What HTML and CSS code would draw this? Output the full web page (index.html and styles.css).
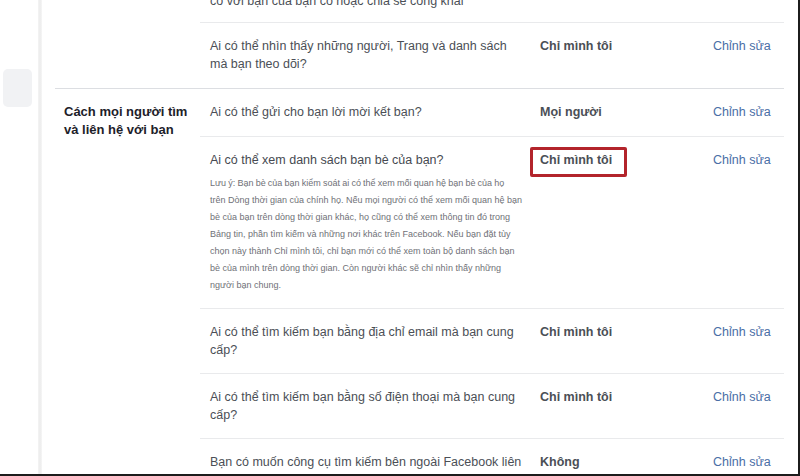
FILE: index.html
```html
<!DOCTYPE html>
<html lang="vi">
<head>
<meta charset="utf-8">
<link rel="stylesheet" href="styles.css">
</head>
<body>
<div class="frame">
  <aside class="side">
    <div class="side-item"></div>
  </aside>
  <div class="rule"></div>
  <main class="main">
    <section class="section first">
      <div class="label"></div>
      <div class="rows">
        <div class="row cut">
          <div class="q">có với bạn của bạn có hoặc chia sẻ công khai</div>
          <div class="v"></div>
          <div class="e"></div>
        </div>
        <div class="row">
          <div class="q">Ai có thể nhìn thấy những người, Trang và danh sách mà bạn theo dõi?</div>
          <div class="v">Chỉ mình tôi</div>
          <div class="e">Chỉnh sửa</div>
        </div>
      </div>
    </section>
    <section class="section">
      <div class="label">Cách mọi người tìm và liên hệ với bạn</div>
      <div class="rows">
        <div class="row">
          <div class="q">Ai có thể gửi cho bạn lời mời kết bạn?</div>
          <div class="v">Mọi người</div>
          <div class="e">Chỉnh sửa</div>
        </div>
        <div class="row tall">
          <div class="q">
            <div class="qh">Ai có thể xem danh sách bạn bè của bạn?</div>
            <div class="note">
              <span class="nl first-line">Lưu ý: Bạn bè của bạn kiểm soát ai có thể xem mối quan hệ bạn bè của họ</span>
              <span class="nl">trên Dòng thời gian của chính họ. Nếu mọi người có thể xem mối quan hệ bạn</span>
              <span class="nl">bè của bạn trên dòng thời gian khác, họ cũng có thể xem thông tin đó trong</span>
              <span class="nl">Bảng tin, phần tìm kiếm và những nơi khác trên Facebook. Nếu bạn đặt tùy</span>
              <span class="nl">chọn này thành Chỉ mình tôi, chỉ bạn mới có thể xem toàn bộ danh sách bạn</span>
              <span class="nl">bè của mình trên dòng thời gian. Còn người khác sẽ chỉ nhìn thấy những</span>
              <span class="nl">người bạn chung.</span>
            </div>
          </div>
          <div class="v"><span class="mark">Chỉ mình tôi</span></div>
          <div class="e">Chỉnh sửa</div>
        </div>
        <div class="row s">
          <div class="q">Ai có thể tìm kiếm bạn bằng địa chỉ email mà bạn cung cấp?</div>
          <div class="v">Chỉ mình tôi</div>
          <div class="e">Chỉnh sửa</div>
        </div>
        <div class="row s">
          <div class="q">Ai có thể tìm kiếm bạn bằng số điện thoại mà bạn cung cấp?</div>
          <div class="v">Chỉ mình tôi</div>
          <div class="e">Chỉnh sửa</div>
        </div>
        <div class="row s">
          <div class="q">Bạn có muốn công cụ tìm kiếm bên ngoài Facebook liên kết đến trang cá nhân của bạn không?</div>
          <div class="v">Không</div>
          <div class="e">Chỉnh sửa</div>
        </div>
      </div>
    </section>
  </main>
</div>
</body>
</html>
```

FILE: styles.css
```css
html, body {
  margin: 0;
  padding: 0;
  background: #fff;
}
body {
  width: 800px;
  height: 476px;
  overflow: hidden;
  font-family: "Liberation Sans", Arial, sans-serif;
  color: #4b4f56;
}
.frame {
  box-sizing: border-box;
  width: 800px;
  height: 476px;
  border-right: 2px solid #1c1c1c;
  border-bottom: 2px solid #1c1c1c;
  display: flex;
  overflow: hidden;
}
.side {
  width: 38px;
  flex: none;
  padding-top: 69px;
  padding-left: 3px;
  box-sizing: border-box;
}
.side-item {
  width: 29px;
  height: 38px;
  background: #f1f2f4;
  border-radius: 5px;
}
.rule {
  width: 4px;
  flex: none;
  background: linear-gradient(to right, #f4f4f4, #ececec, #f6f6f6);
}
.main {
  flex: 1;
  padding-left: 13px;
  padding-right: 14px;
  margin-top: -8px;
}
.section {
  display: flex;
  border-top: 1px solid #dcdee2;
}
.section.first {
  border-top: none;
}
.label {
  width: 145px;
  flex: none;
  box-sizing: border-box;
  padding: 14px 0 0 9px;
  font-size: 13px;
  line-height: 18px;
  font-weight: bold;
  color: #1d2129;
}
.rows {
  flex: 1;
}
.row {
  display: flex;
  border-top: 1px solid #e9eaec;
  padding: 14px 0 15px;
  font-size: 12.5px;
  line-height: 18px;
}
.row.tall,
.row.s {
  padding-bottom: 14px;
}
.rows .row:first-child {
  border-top: none;
}
.row.cut {
  padding: 0 0 12px;
}
.q {
  width: 340px;
  flex: none;
  box-sizing: border-box;
  padding-left: 10px;
  padding-right: 16px;
}
.qh {
  font-size: 12.5px;
  line-height: 18px;
  color: #464a51;
}
.note {
  margin-top: 6px;
  font-size: 9px;
  line-height: 17px;
  color: #6f7177;
}
.nl {
  display: block;
  white-space: nowrap;
}
.nl.first-line {
  word-spacing: -0.3px;
}
.v {
  width: 173px;
  flex: none;
  font-weight: bold;
  color: #4b4f56;
}
.mark {
  display: inline-block;
  margin: -4px 0 0 -10px;
  padding: 1px 12px 5px 7px;
  border: 3px solid #b3242b;
  border-radius: 2px;
  line-height: 18px;
}
.e {
  flex: 1;
  color: #4a6ea6;
}
```
